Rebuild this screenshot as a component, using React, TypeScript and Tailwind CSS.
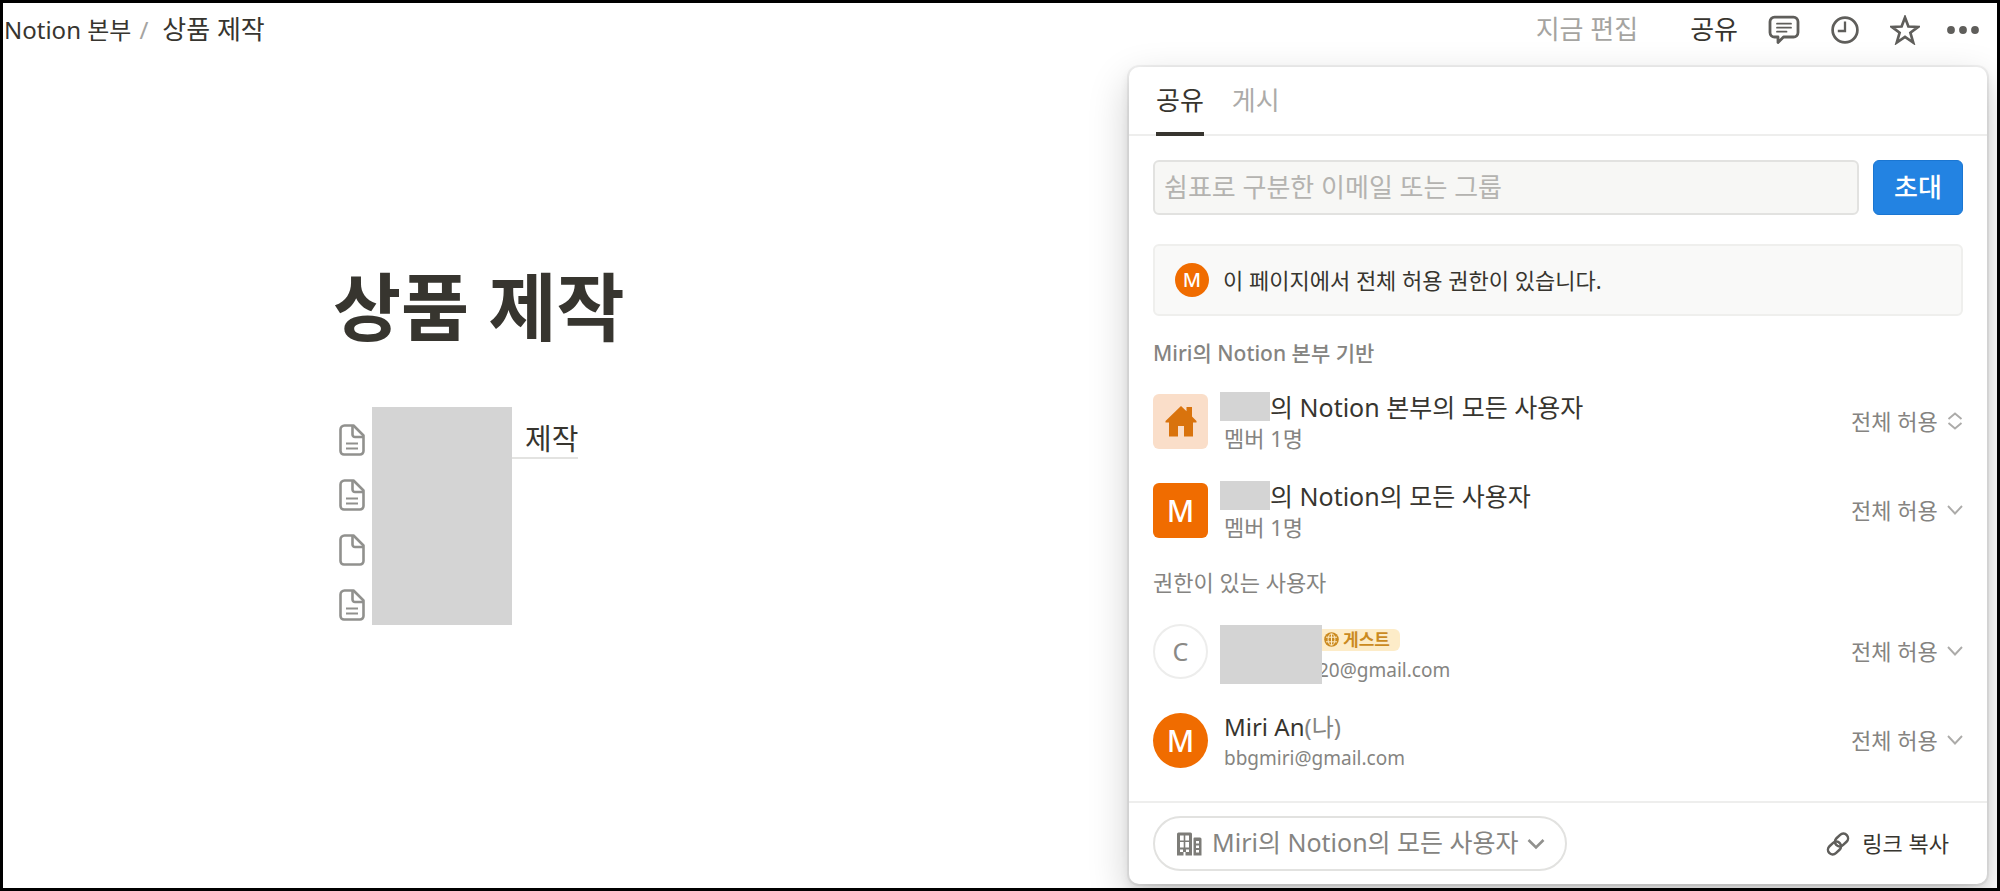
import React, { useState } from 'react';

const font = "font-['Noto_Sans','Noto_Sans_CJK_KR',sans-serif]";

const PageIcon: React.FC<{ empty?: boolean }> = ({ empty }) => (
  <svg width="26" height="32" viewBox="0 0 26 32" fill="none" stroke="#91918e" strokeWidth="2.6" strokeLinejoin="round">
    <path d="M5.500 1.500h9L24.500 11.500V27a3.500 3.500 0 0 1-3.500 3.500H5A3.500 3.500 0 0 1 1.500 27V5.500a4 4 0 0 1 4-4z" />
    <path d="M13.500 1.500V10.500a2.500 2.500 0 0 0 2.500 2.500H24" />
    {!empty && <path d="M7 19.500h12M7 24.500h12" strokeWidth="1.900" />}
  </svg>
);

const CommentIcon = () => (
  <svg width="32" height="30" viewBox="0 0 32 30" fill="none" stroke="#5f5e5b" strokeWidth="2.8" strokeLinejoin="round">
    <path d="M6.500 2.200h19a4.500 4.500 0 0 1 4.500 4.500V17.500a4.500 4.500 0 0 1-4.500 4.500H15.500L10 27.600V22H6.500A4.500 4.500 0 0 1 2 17.500V6.700a4.500 4.500 0 0 1 4.500-4.500z" />
    <path d="M9 8.700h14M9 12.700h14M9 16.700h9.500" strokeWidth="1.800" strokeLinecap="round" />
  </svg>
);

const ClockIcon = () => (
  <svg width="28" height="28" viewBox="0 0 28 28" fill="none" stroke="#5f5e5b" strokeWidth="2.700">
    <circle cx="14" cy="14" r="12.400" />
    <path d="M14 5.500V15H6.800" strokeWidth="2.300" />
  </svg>
);

const StarIcon = () => (
  <svg width="30" height="30" viewBox="0 0 30 30" fill="none" stroke="#5f5e5b" strokeWidth="2.700">
    <path d="M15 2.500l3.400 9 9.700.4-7.700 5.900 2.800 9.700-8.200-5.600-8.200 5.600 2.800-9.700-7.700-5.900 9.700-.4z" />
  </svg>
);

const DotsIcon = () => (
  <svg width="32" height="8" viewBox="0 0 32 8" fill="#5f5e5b">
    <circle cx="4" cy="4" r="3.900" />
    <circle cx="16" cy="4" r="3.900" />
    <circle cx="28" cy="4" r="3.900" />
  </svg>
);

const HomeIcon = () => (
  <svg width="32" height="32" viewBox="0 0 32 32" fill="#d9730d">
    <path d="M16 0l5.500 5.200V1H27v9.500L31.500 15v1.500H28V30.500H19V20h-6v10.500H4V16.500H0.500V15z" />
  </svg>
);

const BuildingIcon = () => (
  <svg width="26" height="24" viewBox="0 0 26 24" fill="#7d7c78">
    <path
      fillRule="evenodd"
      d="M2.500 0.500h12A1.500 1.500 0 0 1 16 2v21.500H1V2A1.500 1.500 0 0 1 2.500 0.500zM4 3.500v5h3.700v-5zm5.300 0v5H13v-5zM4 10v5.500h3.700V10zm5.300 0v5.500H13V10zM4 17.500v2.500h3V17.500zm6 0v2.500h3V17.500zM7.500 20v3.500h2V20z"
    />
    <path
      fillRule="evenodd"
      d="M18.500 5.500H24A1.500 1.500 0 0 1 25.500 7v16.500h-8V6.500a1 1 0 0 1 1-1zM20 9v2.500h3V9zm0 4.500V16h3v-2.500zm0 4.500v2.500h3V18z"
    />
  </svg>
);

const LinkIcon = () => (
  <svg width="24" height="24" viewBox="0 0 24 24" fill="none" stroke="#5f5e5b" strokeWidth="2.500">
    <rect x="8.300" y="3.300" width="14.400" height="9.400" rx="4.700" transform="rotate(-43 15.500 8)" />
    <rect x="1.300" y="11.300" width="14.400" height="9.400" rx="4.700" transform="rotate(-43 8.500 16)" />
  </svg>
);

const GlobeIcon = () => (
  <svg width="15" height="15" viewBox="0 0 15 15" fill="none" stroke="#fdecc8" strokeWidth="1">
    <circle cx="7.500" cy="7.500" r="7.300" fill="#cb8a1f" stroke="none" />
    <path d="M2 5.200h11M2 9.800h11M7.500 2v11" />
    <ellipse cx="7.500" cy="7.500" rx="3.400" ry="5.800" />
  </svg>
);

const Chevron: React.FC<{ updown?: boolean }> = ({ updown }) => (
  <svg width="16" height="18" viewBox="0 0 16 18" fill="none" stroke="#acaba9" strokeWidth="1.900">
    {updown ? <path d="M1.500 7L8 1.500 14.500 7M1.500 11L8 16.500 14.500 11" /> : <path d="M1 5l7 7.500L15 5" />}
  </svg>
);

interface AccessProps {
  name: string;
  updown?: boolean;
}

const AccessSelect: React.FC<AccessProps> = ({ name, updown }) => (
  <div className="relative ml-auto flex items-center pb-[2px]">
    <select
      aria-label={name}
      className="cursor-pointer appearance-none bg-transparent pr-[25px] text-[22px] leading-8 text-[#858481] outline-none"
    >
      <option>전체 허용</option>
    </select>
    <span className="pointer-events-none absolute right-0">
      <Chevron updown={updown} />
    </span>
  </div>
);

const Row: React.FC<{ children: React.ReactNode }> = ({ children }) => (
  <li className="flex h-[89px] items-center">{children}</li>
);

const TopBar = () => (
  <header className="flex h-[53px] items-center justify-between pr-[18px] pl-px text-[26px] text-[#37352f]">
    <nav className="flex items-center">
      <a href="#home" className="text-[24px]">Notion 본부</a>
      <span className="px-2 text-[24px] text-[#a5a4a1]">/</span>
      <a href="#page" className="pl-[6px]">상품 제작</a>
    </nav>
    <div className="flex items-center">
      <span className="text-[#a5a4a1]">지금 편집</span>
      <button type="button" className="ml-[52px]">공유</button>
      <button type="button" aria-label="댓글" className="ml-[30px]"><CommentIcon /></button>
      <button type="button" aria-label="업데이트" className="ml-[31px]"><ClockIcon /></button>
      <button type="button" aria-label="즐겨찾기" className="ml-[31px]"><StarIcon /></button>
      <button type="button" aria-label="더 보기" className="ml-[27px]"><DotsIcon /></button>
    </div>
  </header>
);

const Document = () => (
  <main className="pt-[206px] pl-[330px] text-[#37352f]">
    <h1 className="text-[74px] leading-[90px] font-bold">상품 제작</h1>
    <div className="relative mt-[60px] w-fit pl-[6px]">
      <ul>
        <li className="flex h-[55px] items-center">
          <PageIcon />
          <a href="#sub" className="ml-[146px] border-b-2 border-[#e3e3e1] pl-[14px] text-[29px] leading-[36px]">
            제작
          </a>
        </li>
        <li className="flex h-[55px] items-center"><PageIcon /></li>
        <li className="flex h-[55px] items-center"><PageIcon empty /></li>
        <li className="flex h-[55px] items-center"><PageIcon /></li>
      </ul>
      {/* redacted page names */}
      <div className="absolute -top-[5px] left-[39px] h-[218px] w-[140px] bg-[#d4d4d4]" />
    </div>
  </main>
);

const SharePanel = () => {
  const [email, setEmail] = useState('');

  return (
    <section className="absolute top-[64px] right-[10px] w-[858px] rounded-[10px] bg-white text-[#37352f] shadow-[0_0_0_2px_rgba(15,15,15,0.05),0_5px_10px_rgba(15,15,15,0.1),0_15px_41px_rgba(15,15,15,0.2)]">
      <div className="flex h-[69px] gap-7 border-b-2 border-[#eeeeed] px-[27px] text-[26px]">
        <button type="button" className="relative">
          공유
          <span className="absolute inset-x-0 -bottom-[2px] h-1 bg-[#37352f]" />
        </button>
        <button type="button" className="text-[#acaba9]">게시</button>
      </div>

      <div className="px-6 pt-6 pb-4">
        <form className="flex gap-[14px]" onSubmit={(e) => e.preventDefault()}>
          <input
            type="text"
            aria-label="초대할 사람"
            value={email}
            onChange={(e) => setEmail(e.target.value)}
            placeholder="쉼표로 구분한 이메일 또는 그룹"
            className="h-[55px] min-w-0 flex-1 rounded-md border-2 border-[#e2e2e0] bg-[#f7f7f5] px-[9px] pb-[2px] text-[26px] outline-none placeholder:text-[#b4b3b0]"
          />
          <button
            type="submit"
            className="h-[55px] w-[90px] rounded-md border border-[#1a76d2] bg-[#2383e2] text-[26px] font-medium text-white"
          >
            초대
          </button>
        </form>

        <div className="mt-[29px] flex h-[72px] items-center rounded-md border-2 border-[#efefed] bg-[#f9f9f8] px-5 text-[22px]">
          <span className="flex size-[34px] items-center justify-center rounded-full bg-[#f06c00] text-[20px] font-medium text-white">
            M
          </span>
          <p className="ml-[14px]">이 페이지에서 전체 허용 권한이 있습니다.</p>
        </div>

        <h2 className="mt-5 mb-[7px] text-[21px] leading-[34px] font-medium text-[#858481]">Miri의 Notion 본부 기반</h2>
        <ul>
          <Row>
            <span className="flex size-[55px] items-center justify-center rounded-md bg-[#fadec9]"><HomeIcon /></span>
            <div className="ml-3">
              <div className="flex h-8 items-center text-[25px] leading-8">
                <span className="h-[29px] w-[50px] bg-[#d4d4d4]" />
                의 Notion 본부의 모든 사용자
              </div>
              <div className="pl-1 text-[22px] leading-[30px] text-[#858481]">멤버 1명</div>
            </div>
            <AccessSelect name="본부 권한" updown />
          </Row>
          <Row>
            <span className="flex size-[55px] items-center justify-center rounded-md bg-[#f06c00] text-[30px] font-medium text-white">M</span>
            <div className="ml-3">
              <div className="flex h-8 items-center text-[25px] leading-8">
                <span className="h-[29px] w-[50px] bg-[#d4d4d4]" />
                의 Notion의 모든 사용자
              </div>
              <div className="pl-1 text-[22px] leading-[30px] text-[#858481]">멤버 1명</div>
            </div>
            <AccessSelect name="워크스페이스 권한" />
          </Row>
        </ul>

        <h2 className="mt-[10px] mb-2 text-[22px] leading-[34px] text-[#858481]">권한이 있는 사용자</h2>
        <ul>
          <Row>
            <span className="flex size-[55px] items-center justify-center rounded-full border-2 border-[#ededec] text-[25px] text-[#8a8986]">C</span>
            <div className="ml-3 flex items-center pt-[6px]">
              <span className="relative z-10 h-[59px] w-[102px] bg-[#d4d4d4]" />
              <div>
                <div className="flex h-[30px] items-center">
                  <span className="flex h-[22px] items-center gap-1 rounded-r-md bg-[#fdecc8] pr-[10px] pl-[2px] text-[17px] font-bold text-[#cb8a1f]">
                    <GlobeIcon />
                    게스트
                  </span>
                </div>
                <div className="-ml-1 text-[19px] leading-[30px] text-[#858481]">20@gmail.com</div>
              </div>
            </div>
            <AccessSelect name="게스트 권한" />
          </Row>
          <Row>
            <span className="flex size-[55px] items-center justify-center rounded-full bg-[#f06c00] text-[30px] font-medium text-white">M</span>
            <div className="ml-4 pt-[2px]">
              <div className="text-[24px] leading-8">
                Miri An<span className="text-[#858481]">(나)</span>
              </div>
              <div className="text-[19px] leading-[30px] text-[#858481]">bbgmiri@gmail.com</div>
            </div>
            <AccessSelect name="내 권한" />
          </Row>
        </ul>
      </div>

      <div className="flex items-center justify-between border-t-2 border-[#eeeeed] px-6 py-[13px]">
        <div className="relative flex items-center text-[25px] text-[#858481]">
          <span className="pointer-events-none absolute left-[23px]"><BuildingIcon /></span>
          <select
            aria-label="공유 범위"
            className="h-[55px] cursor-pointer appearance-none rounded-full border-2 border-[#e2e2e0] bg-transparent pr-[46px] pb-[2px] pl-[57px] outline-none"
          >
            <option>Miri의 Notion의 모든 사용자</option>
          </select>
          <svg className="pointer-events-none absolute right-[22px]" width="18" height="18" viewBox="0 0 18 18" fill="none" stroke="#91918e" strokeWidth="2.600">
            <path d="M1.500 5L9 12.500 16.500 5" />
          </svg>
        </div>
        <button type="button" className="flex items-center gap-3 pr-[14px] text-[22px]">
          <LinkIcon />
          링크 복사
        </button>
      </div>
    </section>
  );
};

const App: React.FC = () => {
  return (
    <div className={`relative min-h-screen overflow-hidden border-3 border-black bg-white ${font}`}>
      <TopBar />
      <Document />
      <SharePanel />
    </div>
  );
};

export default App;
